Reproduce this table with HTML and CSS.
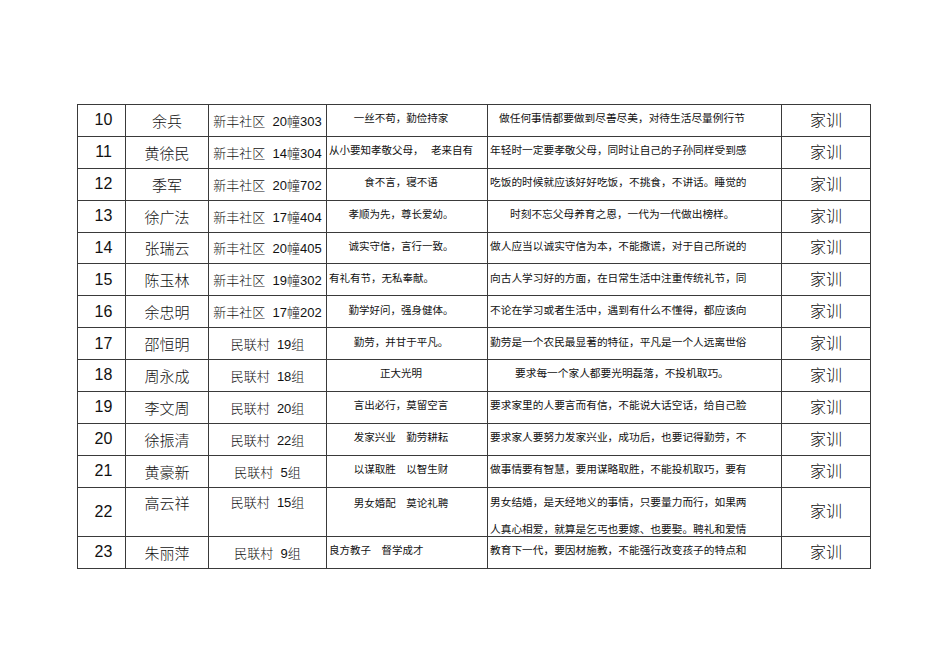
FILE: index.html
```html
<!DOCTYPE html>
<html lang="zh-CN">
<head>
<meta charset="utf-8">
<title>家训</title>
<link rel="stylesheet" href="styles.css">
</head>
<body>
<div class="sheet">
  <div class="c num">10</div><div class="c name">余兵</div><div class="c addr">新丰社区&nbsp; 20幢303</div><div class="c motto">一丝不苟，勤俭持家</div><div class="c desc ind1">做任何事情都要做到尽善尽美，对待生活尽量例行节</div><div class="c jx">家训</div>
  <div class="c num">11</div><div class="c name">黄徐民</div><div class="c addr">新丰社区&nbsp; 14幢304</div><div class="c motto left">从小要知孝敬父母，　 老来自有</div><div class="c desc">年轻时一定要孝敬父母，同时让自己的子孙同样受到感</div><div class="c jx">家训</div>
  <div class="c num">12</div><div class="c name">季军</div><div class="c addr">新丰社区&nbsp; 20幢702</div><div class="c motto">食不言，寝不语</div><div class="c desc">吃饭的时候就应该好好吃饭，不挑食，不讲话。睡觉的</div><div class="c jx">家训</div>
  <div class="c num">13</div><div class="c name">徐广法</div><div class="c addr">新丰社区&nbsp; 17幢404</div><div class="c motto">孝顺为先，尊长爱幼。</div><div class="c desc ind2">时刻不忘父母养育之恩，一代为一代做出榜样。</div><div class="c jx">家训</div>
  <div class="c num">14</div><div class="c name">张瑞云</div><div class="c addr">新丰社区&nbsp; 20幢405</div><div class="c motto">诚实守信，言行一致。</div><div class="c desc">做人应当以诚实守信为本，不能撒谎，对于自己所说的</div><div class="c jx">家训</div>
  <div class="c num">15</div><div class="c name">陈玉林</div><div class="c addr">新丰社区&nbsp; 19幢302</div><div class="c motto left">有礼有节，无私奉献。</div><div class="c desc">向古人学习好的方面，在日常生活中注重传统礼节，同</div><div class="c jx">家训</div>
  <div class="c num">16</div><div class="c name">余忠明</div><div class="c addr">新丰社区&nbsp; 17幢202</div><div class="c motto">勤学好问，强身健体。</div><div class="c desc">不论在学习或者生活中，遇到有什么不懂得，都应该向</div><div class="c jx">家训</div>
  <div class="c num">17</div><div class="c name">邵恒明</div><div class="c addr">民联村&nbsp; 19组</div><div class="c motto">勤劳，并甘于平凡。</div><div class="c desc">勤劳是一个农民最显著的特征，平凡是一个人远离世俗</div><div class="c jx">家训</div>
  <div class="c num">18</div><div class="c name">周永成</div><div class="c addr">民联村&nbsp; 18组</div><div class="c motto">正大光明</div><div class="c desc ind3">要求每一个家人都要光明磊落，不投机取巧。</div><div class="c jx">家训</div>
  <div class="c num">19</div><div class="c name">李文周</div><div class="c addr">民联村&nbsp; 20组</div><div class="c motto">言出必行，莫留空言</div><div class="c desc">要求家里的人要言而有信，不能说大话空话，给自己脸</div><div class="c jx">家训</div>
  <div class="c num">20</div><div class="c name">徐振清</div><div class="c addr">民联村&nbsp; 22组</div><div class="c motto">发家兴业　勤劳耕耘</div><div class="c desc">要求家人要努力发家兴业，成功后，也要记得勤劳，不</div><div class="c jx">家训</div>
  <div class="c num">21</div><div class="c name">黄豪新</div><div class="c addr">民联村&nbsp; 5组</div><div class="c motto">以谋取胜　以智生财</div><div class="c desc">做事情要有智慧，要用谋略取胜，不能投机取巧，要有</div><div class="c jx">家训</div>
  <div class="c num">22</div><div class="c name top">高云祥</div><div class="c addr top">民联村&nbsp; 15组</div><div class="c motto top">男女婚配　莫论礼聘</div><div class="c desc two">男女结婚，是天经地义的事情，只要量力而行，如果两<br>人真心相爱，就算是乞丐也要嫁、也要娶。聘礼和爱情</div><div class="c jx">家训</div>
  <div class="c num">23</div><div class="c name">朱丽萍</div><div class="c addr">民联村&nbsp; 9组</div><div class="c motto left">良方教子　督学成才</div><div class="c desc">教育下一代，要因材施教，不能强行改变孩子的特点和</div><div class="c jx">家训</div>
</div>
</body>
</html>
```

FILE: styles.css
```css
html, body {
  margin: 0;
  padding: 0;
  background: #ffffff;
}

body {
  font-family: "Liberation Sans", "Noto Sans CJK SC", sans-serif;
  color: #111111;
}

.sheet {
  margin: 104px 0 0 77px;
  width: 794px;
  display: grid;
  grid-template-columns: 48px 83px 118px 161px 294px 89px;
  grid-template-rows: repeat(12, 31.875px) 49px 32px;
  border-top: 1px solid #3a3a3a;
  border-left: 1px solid #3a3a3a;
  box-sizing: border-box;
}

.c {
  box-sizing: border-box;
  border-right: 1px solid #3a3a3a;
  border-bottom: 1px solid #3a3a3a;
  display: flex;
  align-items: center;
  justify-content: center;
  overflow: hidden;
  white-space: nowrap;
}

.num {
  font-size: 16px;
  padding-left: 4px;
}

.name {
  font-family: "Noto Sans CJK SC", sans-serif;
  font-size: 15px;
  font-weight: 300;
}

.addr {
  font-size: 13px;
  font-weight: 300;
  font-family: "Liberation Sans", "Noto Sans CJK SC", sans-serif;
}

.motto {
  font-family: "Noto Sans CJK SC", sans-serif;
  font-size: 10.5px;
  font-weight: 400;
  padding-right: 12px;
  padding-bottom: 5px;
}

.motto.left {
  justify-content: flex-start;
  padding-left: 2px;
  padding-right: 0;
}

.desc {
  font-family: "Noto Sans CJK SC", sans-serif;
  font-size: 10.7px;
  font-weight: 400;
  justify-content: flex-start;
  padding-left: 2px;
  padding-bottom: 5px;
}

.desc.ind1 { padding-left: 11px; }
.desc.ind2 { padding-left: 22px; }
.desc.ind3 { padding-left: 27px; }

.desc.two {
  display: block;
  line-height: 27px;
  padding: 0 0 0 2px;
}

.top {
  align-items: flex-start;
  padding-top: 4px;
}

.motto.top {
  padding-top: 7px;
}

.jx {
  font-family: "Noto Sans CJK SC", sans-serif;
  font-size: 16px;
  font-weight: 300;
  padding-bottom: 3px;
}
```
